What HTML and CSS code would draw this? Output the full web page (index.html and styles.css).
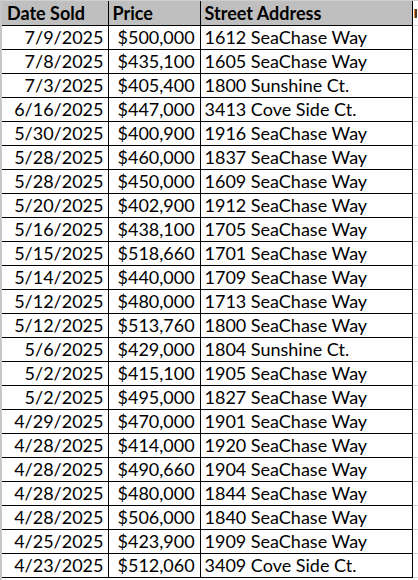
FILE: index.html
```html
<!DOCTYPE html>
<html>
<head>
<meta charset="utf-8">
<link rel="stylesheet" href="styles.css">
</head>
<body>
<div class="sheet">
<table class="grid">
<colgroup><col class="c-date"><col class="c-price"><col class="c-addr"><col class="c-next"></colgroup>
<thead>
<tr><th class="h-date">Date Sold</th><th class="h-price">Price</th><th class="h-addr">Street Address</th><th class="next-head"><span class="stub"></span></th></tr>
</thead>
<tbody>
<tr><td class="date">7/9/2025</td><td class="price">$500,000</td><td class="addr">1612 SeaChase Way</td><td class="next"></td></tr>
<tr><td class="date">7/8/2025</td><td class="price">$435,100</td><td class="addr">1605 SeaChase Way</td><td class="next"></td></tr>
<tr><td class="date">7/3/2025</td><td class="price">$405,400</td><td class="addr">1800 Sunshine Ct.</td><td class="next"></td></tr>
<tr><td class="date">6/16/2025</td><td class="price">$447,000</td><td class="addr">3413 Cove Side Ct.</td><td class="next"></td></tr>
<tr><td class="date">5/30/2025</td><td class="price">$400,900</td><td class="addr">1916 SeaChase Way</td><td class="next"></td></tr>
<tr><td class="date">5/28/2025</td><td class="price">$460,000</td><td class="addr">1837 SeaChase Way</td><td class="next"></td></tr>
<tr><td class="date">5/28/2025</td><td class="price">$450,000</td><td class="addr">1609 SeaChase Way</td><td class="next"></td></tr>
<tr><td class="date">5/20/2025</td><td class="price">$402,900</td><td class="addr">1912 SeaChase Way</td><td class="next"></td></tr>
<tr><td class="date">5/16/2025</td><td class="price">$438,100</td><td class="addr">1705 SeaChase Way</td><td class="next"></td></tr>
<tr><td class="date">5/15/2025</td><td class="price">$518,660</td><td class="addr">1701 SeaChase Way</td><td class="next"></td></tr>
<tr><td class="date">5/14/2025</td><td class="price">$440,000</td><td class="addr">1709 SeaChase Way</td><td class="next"></td></tr>
<tr><td class="date">5/12/2025</td><td class="price">$480,000</td><td class="addr">1713 SeaChase Way</td><td class="next"></td></tr>
<tr><td class="date">5/12/2025</td><td class="price">$513,760</td><td class="addr">1800 SeaChase Way</td><td class="next"></td></tr>
<tr><td class="date">5/6/2025</td><td class="price">$429,000</td><td class="addr">1804 Sunshine Ct.</td><td class="next"></td></tr>
<tr><td class="date">5/2/2025</td><td class="price">$415,100</td><td class="addr">1905 SeaChase Way</td><td class="next"></td></tr>
<tr><td class="date">5/2/2025</td><td class="price">$495,000</td><td class="addr">1827 SeaChase Way</td><td class="next"></td></tr>
<tr><td class="date">4/29/2025</td><td class="price">$470,000</td><td class="addr">1901 SeaChase Way</td><td class="next"></td></tr>
<tr><td class="date">4/28/2025</td><td class="price">$414,000</td><td class="addr">1920 SeaChase Way</td><td class="next"></td></tr>
<tr><td class="date">4/28/2025</td><td class="price">$490,660</td><td class="addr">1904 SeaChase Way</td><td class="next"></td></tr>
<tr><td class="date">4/28/2025</td><td class="price">$480,000</td><td class="addr">1844 SeaChase Way</td><td class="next"></td></tr>
<tr><td class="date">4/28/2025</td><td class="price">$506,000</td><td class="addr">1840 SeaChase Way</td><td class="next"></td></tr>
<tr><td class="date">4/25/2025</td><td class="price">$423,900</td><td class="addr">1909 SeaChase Way</td><td class="next"></td></tr>
<tr><td class="date">4/23/2025</td><td class="price">$512,060</td><td class="addr">3409 Cove Side Ct.</td><td class="next"></td></tr>
</tbody>
</table>
</div>
</body>
</html>
```

FILE: styles.css
```css
html, body {
  margin: 0;
  padding: 0;
  background: #ffffff;
}

.sheet {
  width: 418px;
  height: 580px;
  overflow: hidden;
  border-left: 2px solid #c6c6c6;
  box-sizing: border-box;
  border-top: 1px solid #d0d0d0;
}

.grid {
  border-collapse: collapse;
  table-layout: fixed;
  width: 416px;
  font-family: Lato, "Open Sans", sans-serif;
  font-size: 18px;
  color: #000;
}

.c-date { width: 106px; }
.c-price { width: 92px; }
.c-addr { width: 212px; }
.c-next { width: 6px; }

.grid th,
.grid td {
  height: 23px;
  padding: 0;
  border: 1px solid #000;
  white-space: nowrap;
  overflow: hidden;
  line-height: 23px;
}

.grid th {
  background: #bfbfbf;
  font-weight: bold;
  text-align: left;
  border-top: none;
  height: 24px;
}

.grid th.h-date { border-left: none; padding-left: 5px; }
.grid td.date { border-left: none; text-align: right; padding-right: 4px; }

.grid th.h-price { padding-left: 4px; }
.grid td.price { text-align: left; padding-left: 9px; }

.grid th.h-addr,
.grid td.addr { padding-left: 4px; }

.grid th.next-head,
.grid td.next {
  background: #fff;
  border-top-color: #d4d4d4;
  border-bottom-color: #d4d4d4;
  border-right: none;
  padding-left: 2px;
}

.grid thead th.next-head {
  border-bottom: 1px solid #d4d4d4;
  vertical-align: top;
}

.stub {
  display: block;
  width: 2px;
  height: 9px;
  margin-top: 8px;
  background: #5a3a20;
  box-shadow: -1px 0 0 #d98a3a;
}
```
